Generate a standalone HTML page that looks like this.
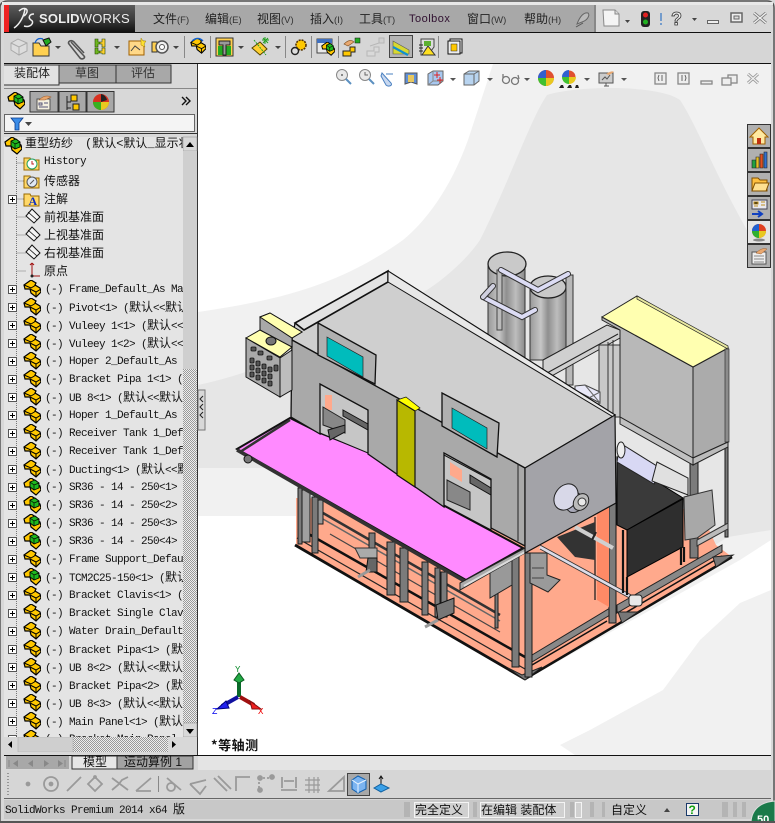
<!DOCTYPE html>
<html><head><meta charset="utf-8">
<style>
html,body{margin:0;padding:0}
body{width:775px;height:823px;position:relative;overflow:hidden;background:#d8d8d8;font-family:"Liberation Sans","WenQuanYi Zen Hei",sans-serif}
.a{position:absolute}
#tree{position:absolute;left:4px;top:137px;width:179px;height:600px;overflow:hidden;background:#e4e4e4}
.r{position:absolute;white-space:pre;font:11px/18px "Liberation Mono","WenQuanYi Zen Hei",monospace;letter-spacing:-.6px;color:#111;height:18px}
.r i{font-style:normal;font-size:12px;letter-spacing:0}
.m{position:absolute;top:11px;font-size:12px;color:#222;white-space:pre;line-height:16px}
.m small{font-size:9.5px;color:#333}
.s{position:absolute;font-size:12px;color:#111;white-space:pre;line-height:16px}
svg{position:absolute;left:0;top:0}
</style></head>
<body>
<svg width="775" height="823" style="z-index:0">
<defs>
<symbol id="part" viewBox="0 0 18 18"><path d="M1 5 L8 0 L13 3 L12 5 L17 8 L18 12 L13 17 L8 13 L7 9 L2 9Z" fill="#ffc800" stroke="#000" stroke-width="1.2"/><path d="M1 5L8 8 L13 5 M7 9 L13 12 L18 9 M13 12V17" fill="none" stroke="#000" stroke-width="1"/></symbol>
<symbol id="asm" viewBox="0 0 18 18"><path d="M1 5 L8 0 L13 3 L12 5 L17 8 L18 12 L13 17 L8 13 L7 9 L2 9Z" fill="#ffc800" stroke="#000" stroke-width="1.2"/><path d="M7 4 L12 2 L16 5 V10 L11 12 L7 9Z" fill="#1eb81e" stroke="#000" stroke-width=".9"/><path d="M7 4L11 7 L16 5 M11 7V12" fill="none" stroke="#000" stroke-width=".7"/></symbol>
<symbol id="plus" viewBox="0 0 9 9"><rect x=".5" y=".5" width="8" height="8" fill="#fff" stroke="#555"/><path d="M2 4.500H7M4.500 2V7" stroke="#000"/></symbol>
<symbol id="plane" viewBox="0 0 18 18"><path d="M8 1 L16 9 L10 15 L2 8Z" fill="#f4f4f4" stroke="#111"/><path d="M4 4L13 12" stroke="#111" stroke-width=".8" fill="none"/></symbol>
<symbol id="folder" viewBox="0 0 18 18"><path d="M1 4H7L8 6H16V16H1Z" fill="#ffd868" stroke="#9a6a00"/></symbol>
<pattern id="chk" width="2" height="2" patternUnits="userSpaceOnUse"><rect width="2" height="2" fill="#eee"/><rect width="1" height="1" fill="#999"/><rect x="1" y="1" width="1" height="1" fill="#999"/></pattern>
<linearGradient id="logo" x1="0" x2="0" y1="0" y2="1"><stop offset="0" stop-color="#5c5c5c"/><stop offset=".55" stop-color="#3a3a3a"/><stop offset="1" stop-color="#111"/></linearGradient>
<linearGradient id="tank" x1="0" x2="1" y1="0" y2="0"><stop offset="0" stop-color="#999"/><stop offset=".3" stop-color="#c6c6c6"/><stop offset=".5" stop-color="#8f8f8f"/><stop offset=".75" stop-color="#bdbdbd"/><stop offset="1" stop-color="#8a8a8a"/></linearGradient>
<linearGradient id="ball" x1="0" x2="1" y1="0" y2="1"><stop offset="0" stop-color="#f4f4ff"/><stop offset=".5" stop-color="#c8c8e8"/><stop offset="1" stop-color="#888"/></linearGradient>
</defs>

<!-- window frame -->
<rect width="775" height="823" fill="#d8d8d8"/>
<path d="M0 823V8Q0 1 8 1H767Q774 1 774 8V823" fill="none" stroke="#555" stroke-width="1.5"/>
<rect x="2" y="2" width="771" height="3" fill="#e8e8e8"/>
<rect x="135" y="5" width="460" height="27" fill="#a8a8a8"/>
<rect x="595" y="5" width="176" height="27" fill="#d8d8d8"/>
<rect x="594" y="5" width="2" height="27" fill="#888"/>
<rect x="4" y="5" width="5" height="27" fill="#ee2222"/>
<rect x="9" y="5" width="126" height="27" fill="url(#logo)"/>
<rect x="4" y="32" width="767" height="1.2" fill="#111"/>
<rect x="4" y="33" width="767" height="30" fill="#d6d6d6"/>
<rect x="4" y="63" width="767" height="1.2" fill="#111"/>
<!-- logo mark -->
<path d="M14 28 C20 24 24 16 25 9 M19 11 C23 7 28 8 27 12 C26 15 24 16 23 16 M34 14 C29 14 28 18 31 20 C35 22 31 28 24 26" fill="none" stroke="#eee" stroke-width="1.5"/>

<!-- viewport background -->
<rect x="198" y="64" width="573" height="691" fill="#fff"/>
<path d="M493 64 L468 140 C450 190 425 222 403 240 C340 285 280 300 198 312 V516 H298 L525 680 L740 560 L771 540 V64Z" fill="#f1f1f1"/>
<path d="M771 590 L740 603 L700 640 L663 690 L590 730 L560 745 L575 755 H771Z" fill="#f1f1f1"/>
<path d="M198 385 C260 372 330 340 427 290 C450 275 470 255 480 240 C510 180 530 120 547 95 C580 85 660 85 680 100 C700 130 720 190 771 270 V530 L728 537 L525 660 L298 500 V468 H198Z" fill="#e6e6e6"/>

<!-- base / orange floor -->
<path d="M296 498 L296 545 L525 679 L732 557 L716 545 L700 510 L617 505 L420 500Z" fill="#ffa98c"/>
<g fill="none" stroke-linecap="butt">
<path d="M323 513 L500 615" stroke="#333" stroke-width="2.500"/>
<path d="M323 519 L500 621" stroke="#666" stroke-width="1.500"/>
<path d="M330 534 L500 632" stroke="#444" stroke-width="1.200"/>
<path d="M298 528 L525 657" stroke="#111" stroke-width="2.500"/>
<path d="M297 538 L525 669" stroke="#222" stroke-width="1.200"/>
<path d="M295 545 L525 679" stroke="#111" stroke-width="2.800"/>
<path d="M525 679 L732 557" stroke="#111" stroke-width="2.500"/>
</g>
<g stroke="#222" stroke-width="1">
<path d="M532 655 L610 608 V615 L532 662Z" fill="#888"/>
<path d="M617 605 L722 545 V552 L617 613Z" fill="#888"/>
<path d="M532 665 L607 621" stroke="#111" stroke-width="1.500" fill="none"/>
<path d="M620 616 L722 556" stroke="#111" stroke-width="1.500" fill="none"/>
<path d="M508 668 L522 675 L542 667 L525 680Z" fill="#777"/>
<path d="M618 612 L638 612 L622 623Z" fill="#777"/>
<path d="M713 557 L733 555 L716 567Z" fill="#777"/>
</g>
<!-- posts -->
<g fill="#7b7b7b" stroke="#1a1a1a" stroke-width="1">
<rect x="298" y="488" width="4" height="56"/><rect x="302" y="490" width="8" height="52" fill="#a0a0a0"/>
<rect x="312" y="497" width="6" height="56"/><rect x="318" y="500" width="5" height="24" fill="#999"/>
<rect x="369" y="533" width="6" height="27"/>
<rect x="387" y="542" width="8" height="53"/><rect x="400" y="548" width="8" height="54"/>
<rect x="422" y="562" width="6" height="53"/><rect x="435" y="568" width="5" height="49"/><rect x="441" y="572" width="6" height="45"/>
<rect x="495" y="570" width="3" height="58"/>
<rect x="512" y="555" width="7" height="112"/><rect x="525" y="553" width="7" height="124"/>
<rect x="609" y="503" width="7" height="120"/>
<rect x="690" y="458" width="8" height="100"/><rect x="725" y="442" width="3" height="95"/>
</g>
<path d="M597 507 H609 V607 L597 600Z" fill="#ff8a66"/><path d="M595 517V600" stroke="#222" stroke-width="1.300"/>
<!-- valves -->
<path d="M355 548 H377 V558 H360Z" fill="#aaa" stroke="#333"/>
<path d="M368 558 H377 V572 H366Z" fill="#666" stroke="#111"/><path d="M358 577 L370 570" stroke="#999" stroke-width="3"/>
<path d="M436 605 L454 598 V613 L438 620Z" fill="#777" stroke="#111"/><path d="M425 627 L438 620" stroke="#999" stroke-width="3"/>
<!-- motor -->
<path d="M530 553 L547 553 V575 L560 580 L548 592 L530 583Z" fill="#9a9a9a" stroke="#222"/><path d="M532 568h12M532 578h12" stroke="#444"/>
<path d="M490 566 L512 556 V585 L490 598Z" fill="#999" stroke="#222"/>
<!-- pipe -->
<path d="M557 537 L595 522 V560 L575 557Z" fill="#333"/>
<path d="M540 547 L633 598" stroke="#dcdce8" stroke-width="3.500"/><path d="M540 545 L633 596 M540 549 L633 600" stroke="#333" stroke-width=".8"/>
<path d="M575 527 L613 548" stroke="#d0d0d0" stroke-width="4"/><path d="M592 540 l4-8" stroke="#222" stroke-width="2"/>
<rect x="629" y="595" width="13" height="11" rx="3" fill="#e8e8e8" stroke="#222"/>

<!-- dark bin -->
<path d="M617 457 L683 498 L627 530 L617 525Z" fill="#3a3a3a" stroke="#000"/>
<path d="M627 530 L683 499 V547 L627 577Z" fill="#2e2e2e" stroke="#000"/>
<path d="M623 530V593M627 577V595M681 547V565M684 547V562" stroke="#111" stroke-width="2.200"/>
<!-- rear motor -->
<path d="M620 443 L660 468 L654 484 L617 462Z" fill="#d8d8f4" stroke="#222"/>
<ellipse cx="621" cy="450" rx="4" ry="8" fill="#eee" stroke="#222"/>
<path d="M657 462 L688 478 L688 495 L652 481Z" fill="#e0e0e0" stroke="#222"/>
<path d="M684 497 L712 490 L715 525 L697 538 L685 540Z" fill="#a8a8a8" stroke="#333"/>
<path d="M697 540 L728 523 V529 L697 546Z" fill="#bbb" stroke="#333"/>

<!-- tanks -->
<path d="M488 263 V352 L525 372 V263Z" fill="url(#tank)" stroke="#333"/>
<ellipse cx="507" cy="264" rx="19" ry="12" fill="#c9c9c9" stroke="#222" stroke-width="1.300"/>
<path d="M530 287 V360 L566 360 V287Z" fill="url(#tank)" stroke="#333"/>
<ellipse cx="548" cy="287" rx="18" ry="11" fill="#c9c9c9" stroke="#222" stroke-width="1.300"/>
<rect x="566" y="275" width="7" height="110" fill="#b8b8b8" stroke="#333"/>
<rect x="497" y="270" width="5" height="60" fill="#bbb" stroke="#444"/>
<g fill="none" stroke-linecap="round">
<path d="M501 270 L538 290 L568 274" stroke="#333" stroke-width="6"/><path d="M501 270 L538 290 L568 274" stroke="#dcdcf4" stroke-width="4"/>
<path d="M483 297 L522 317 L535 310" stroke="#333" stroke-width="6"/><path d="M483 297 L522 317 L535 310" stroke="#dcdcf4" stroke-width="4"/>
<path d="M483 297 L493 286" stroke="#333" stroke-width="6"/><path d="M483 297 L493 286" stroke="#d0d0e0" stroke-width="4"/>
</g>
<!-- connector frame -->
<path d="M543 360 L607 325 L620 330 L620 338 L548 378 L543 372Z" fill="#d0d0d0" stroke="#222"/>
<path d="M547 373 L618 334" stroke="#222"/>
<path d="M599 345 H620 V417 H599Z" fill="#c8c8c8" stroke="#333"/><path d="M608 342V415M613 340V416" stroke="#333"/>
<path d="M575 386 L585 385 L600 392 V403 L575 390Z" fill="#e8e8f8" stroke="#444"/><path d="M585 385 L600 403 M600 392 L585 400" stroke="#666" fill="none"/>

<!-- right cabinet -->
<path d="M602 317 L693 367 V458 L620 417 V330 L602 320Z" fill="#b8b8b8" stroke="#222"/>
<path d="M693 367 L728 348 V442 L693 458Z" fill="#ababab" stroke="#222"/>
<path d="M602 317 L637 296 L728 348 L693 367Z" fill="#ffffb0" stroke="#222"/>
<path d="M637 296 L728 346 V349 L637 299Z" fill="#e8e8a0" stroke="#222" stroke-width=".7"/>
<path d="M725 349 H729 V442 H725Z" fill="#8c8c8c" stroke="#333" stroke-width=".7"/>
<path d="M693 458 L728 442 V447 L693 465Z" fill="#bbb" stroke="#222"/>
<path d="M620 417 L693 458 V465 L620 424Z" fill="#c0c0c0" stroke="#222"/>

<!-- main enclosure top -->
<path d="M388 271 L615 415 L525 468 L292 340 L295 323Z" fill="#cfcfcf" stroke="#111" stroke-width="1.300"/>
<path d="M295 323 L388 271 L388 282 L318 322 L304 330Z" fill="#e2e2e2" stroke="#111" stroke-width="1.600"/>
<path d="M388 271 L615 415 V418 L388 282Z" fill="#e8e8e8" stroke="#111"/>
<!-- pink tray -->
<path d="M237 449 L290 418 L320 433 L368 452 L443 505 L523 548 L466 580Z" fill="#ff8aff" stroke="#111" stroke-width="2"/>
<path d="M237 450 L466 582" stroke="#333" stroke-width="3.500" fill="none"/>
<path d="M240 452 L290 420" stroke="#333" stroke-width="2.500" fill="none"/>
<circle cx="248" cy="459" r="4" fill="#777" stroke="#111"/>
<path d="M460 583 L525 548 V553 L460 590Z" fill="#aaa" stroke="#222"/>
<path d="M464 586 L525 552" stroke="#ddd" stroke-width="2"/>
<!-- opening interiors -->
<path d="M320 384 L368 410 V453 L320 433Z" fill="#c6c6c6" stroke="#111"/>
<path d="M325 395 H332 V410 H325Z" fill="#ffa98c"/><path d="M323 407 L345 420 V433 L323 425Z" fill="#888" stroke="#222"/><path d="M343 410 L368 424 V430 L343 416Z" fill="#666" stroke="#111"/><path d="M328 430 L345 425 V432 L330 440Z" fill="#666" stroke="#111"/>
<path d="M444 455 L491 480 V530 L444 505Z" fill="#c6c6c6" stroke="#111"/>
<path d="M450 462 L462 470 V482 L450 475Z" fill="#ffa98c"/><path d="M447 480 L470 492 V510 L447 500Z" fill="#888" stroke="#222"/><path d="M470 475 L491 488 V495 L470 483Z" fill="#666" stroke="#111"/>
<!-- front wall -->
<path d="M292 340 L525 468 V546 L491 528 V479 L444 453 V507 L368 454 V410 L320 384 V434 L291 417Z" fill="#a9a9a9" stroke="#111" stroke-width="1.300"/>
<path d="M518 464 V541 M525 468V553" stroke="#222" stroke-width="1"/>
<!-- yellow strip -->
<path d="M397 400 L406 397 L420 408 L415 411Z" fill="#ffff00" stroke="#111" stroke-width=".7"/>
<path d="M397 400 L415 411 V487 L397 475Z" fill="#b8b800" stroke="#111" stroke-width="1.200"/>
<!-- right wall -->
<path d="M525 468 L615 415 L616 503 L525 553Z" fill="#a3a3a8" stroke="#111" stroke-width="1.200"/>
<!-- screens -->
<path d="M318 323 L376 355 L375 384 L318 355Z" fill="#b0b0b0" stroke="#111" stroke-width="1.300"/>
<path d="M327 337 L363 357 V377 L327 356Z" fill="#00bcbc" stroke="#222" stroke-width=".7"/>
<path d="M442 393 L499 423 L497 457 L442 426Z" fill="#b0b0b0" stroke="#111" stroke-width="1.300"/>
<path d="M452 408 L487 428 V449 L452 428Z" fill="#00bcbc" stroke="#222" stroke-width=".7"/>
<!-- round port -->
<path d="M568 484 L584 498 C587 505 578 515 570 512 L556 500Z" fill="url(#ball)" stroke="#222"/>
<ellipse cx="566" cy="497" rx="11" ry="14" transform="rotate(35 566 497)" fill="#d8d8e8" stroke="#222"/>
<ellipse cx="581" cy="502" rx="7" ry="9" transform="rotate(35 581 502)" fill="#bbb" stroke="#222"/>
<circle cx="582" cy="502" r="4" fill="#e8e8e8" stroke="#333"/>
<!-- control box -->
<path d="M260 317 L270 313 L302 332 L292 338 V348 L260 330Z" fill="#a8a8a8" stroke="#111"/>
<path d="M260 317 L270 313 L302 332 L292 338Z" fill="#ffffb0" stroke="#111"/>
<path d="M246 338 L260 330 L292 347 L280 357Z" fill="#ffffb0" stroke="#111"/>
<path d="M246 338 L280 358 V397 L246 377Z" fill="#aaa" stroke="#111"/>
<path d="M280 358 L292 350 V390 L280 397Z" fill="#bdbdbd" stroke="#111"/>
<ellipse cx="271" cy="341" rx="5" ry="4" fill="#777" stroke="#111"/>
<g fill="#555" stroke="#111" stroke-width=".8">
<rect x="251" y="347" width="5" height="4" rx="1"/><rect x="258" y="351" width="5" height="4" rx="1"/><rect x="267" y="356" width="5" height="4" rx="1"/>
<rect x="250" y="358" width="4" height="5" rx="1"/><rect x="256" y="361" width="4" height="5" rx="1"/><rect x="262" y="364" width="4" height="5" rx="1"/><rect x="268" y="367" width="4" height="5" rx="1"/><rect x="274" y="365" width="4" height="6" rx="1"/>
<rect x="250" y="365" width="4" height="5" rx="1"/><rect x="256" y="368" width="4" height="5" rx="1"/><rect x="262" y="371" width="4" height="5" rx="1"/><rect x="268" y="374" width="4" height="5" rx="1"/>
<rect x="250" y="372" width="4" height="5" rx="1"/><rect x="256" y="375" width="4" height="5" rx="1"/><rect x="262" y="378" width="4" height="5" rx="1"/><rect x="268" y="381" width="4" height="5" rx="1"/>
</g>

<!-- triad -->
<path d="M239 682 V697" stroke="#0a6a2a" stroke-width="4"/>
<path d="M239 673 L244 680 L239 683 L234 680Z" fill="#22aa44" stroke="#0a5a20"/>
<path d="M238 697 L222 706" stroke="#1010a0" stroke-width="4"/>
<path d="M226 701 L217 709 L229 708Z" fill="#2020f0" stroke="#000080"/>
<path d="M240 697 L254 705" stroke="#a01010" stroke-width="4"/>
<path d="M250 701 L261 709 L252 709Z" fill="#ee2020" stroke="#801010"/>
<text x="235" y="672" font-family="Liberation Mono" font-size="9" fill="#0a8a2a">Y</text>
<text x="212" y="714" font-family="Liberation Mono" font-size="9" fill="#0000ee">Z</text>
<text x="258" y="714" font-family="Liberation Mono" font-size="9" fill="#ee0000">X</text>

<!-- left panel chrome -->
<rect x="4" y="64" width="193" height="73" fill="#d8d8d8"/>
<rect x="197" y="64" width="1" height="691" fill="#333"/>
<rect x="59" y="65" width="112" height="18" fill="#a8a8a8" stroke="#333"/>
<path d="M116 65V83" stroke="#333"/>
<path d="M4 65 H59 V85 H4" fill="#e2e2e2" stroke="#333"/>
<rect x="4" y="88" width="193" height="1" fill="#888"/>
<rect x="4" y="91" width="25" height="21" fill="#d8d8d8"/>
<g fill="#a8a8a8" stroke="#333"><rect x="30" y="91.500" width="28" height="20.500"/><rect x="59" y="91.500" width="27" height="20.500"/><rect x="87" y="91.500" width="27" height="20.500"/></g>
<use href="#asm" x="7" y="92" width="18" height="18"/>
<g transform="translate(36,95)"><rect x="1" y="4" width="13" height="11" fill="#f4f0e0" stroke="#555"/><path d="M3 8h3v2H3zM8 8h4M3 12h9" stroke="#557" fill="none"/><path d="M3 5 Q9 -1 15 2 L9 5Z" fill="#e8a870" stroke="#a06030" stroke-width=".6"/></g>
<g transform="translate(65,95)" stroke="#222"><path d="M2 1V15M2 7H6M2 13H6" fill="none"/><rect x="6" y="0" width="6" height="6" fill="#ffc800"/><rect x="8" y="9" width="6" height="6" fill="#ffc800"/></g>
<circle cx="101" cy="102" r="8" fill="#d83020"/><path d="M101 102 L93 102 A8 8 0 0 0 101 110Z" fill="#38b020"/><path d="M101 102 L109 102 A8 8 0 0 1 101 110Z" fill="#e8c820"/><path d="M101 94 A8 8 0 0 1 107 100 L101 102Z" fill="#222"/>
<path d="M182 97l4 4-4 4M186 97l4 4-4 4" fill="none" stroke="#111" stroke-width="1.400"/>
<rect x="4.500" y="114.500" width="190" height="17" fill="#f4f4f4" stroke="#666"/>
<path d="M11 118 H23 L19 123 V130 H15 V123Z" fill="#3a8ce8" stroke="#0a3a8a" stroke-width=".8"/>
<path d="M25 122H32L28.500 126Z" fill="#444"/>
<rect x="4" y="133" width="193" height="1" fill="#333"/>

<!-- toolbar icons -->
<g transform="translate(10,38)"><path d="M1 5 L8 1 L17 5 V13 L9 17 L1 12Z" fill="#ddd" stroke="#aaa"/><path d="M1 5L9 9L17 5M9 9V17" fill="none" stroke="#aaa"/></g>
<g transform="translate(33,37)"><path d="M0 6H6L8 9H16V19H0Z" fill="#ffd050" stroke="#333"/><path d="M10 3L16 1 L18 5 L13 9Z" fill="#22aa22" stroke="#111"/><path d="M2 6 Q4 0 10 2" fill="none" stroke="#1060d0" stroke-width="1.300"/></g>
<path d="M71 42 L84 56 C86 58 82 60 80 58 L69 44 C67 42 71 39 74 42 L84 53" fill="none" stroke="#555" stroke-width="1.600"/>
<g fill="#6fb820" stroke="#224400" stroke-width=".6"><path d="M95 39h3v3h2v2h-2v3h-3zM95 48h3v3h2v2h-2v1h-3z"/><path d="M105 39h-3v3h-2v2h2v3h3zM105 48h-3v3h-2v2h2v1h3z" fill="#ffd030"/></g>
<g transform="translate(128,38)"><rect x="1" y="3" width="15" height="14" fill="#ffd888" stroke="#a06000"/><path d="M3 13L7 8L12 12" fill="none" stroke="#444"/><path d="M13 0l2 3 3 0-2 3 1 3-4-2Z" fill="#ffe030" stroke="#a08000" stroke-width=".5"/></g>
<g transform="translate(151,39)"><path d="M1 3H6V13H1Z" fill="#ffd050" stroke="#333"/><circle cx="11" cy="8" r="6" fill="#f0f0f0" stroke="#555" stroke-width="1.500"/><circle cx="11" cy="8" r="2.500" fill="#fff" stroke="#555"/></g>
<g transform="translate(190,38)"><use href="#part" width="16" height="16"/><path d="M2 3Q8-2 13 3" stroke="#1060d0" fill="none" stroke-width="1.400"/></g>
<g transform="translate(216,38)"><rect x="0" y="0" width="17" height="18" fill="#ffd050" stroke="#333"/><rect x="2" y="8" width="13" height="9" fill="#22aa22"/><path d="M3 3H14V7H10V17H7V7H3Z" fill="#999" stroke="#222"/></g>
<g transform="translate(252,38)"><path d="M0 10L8 4L15 11L8 17Z" fill="#ffd030" stroke="#554400"/><path d="M2 2L14 17" stroke="#22a020" stroke-dasharray="2 1"/><path d="M13-1v7M10 2h7M11 0l5 5M16 0l-5 5" stroke="#22a020"/></g>
<g transform="translate(290,38)"><circle cx="11" cy="7" r="5" fill="#ffc800" stroke="#553300" stroke-dasharray="2 1" stroke-width="1.600"/><circle cx="5" cy="13" r="3.500" fill="#ddd" stroke="#222" stroke-width="1.400"/></g>
<g transform="translate(317,38)"><rect x="0" y="1" width="15" height="14" fill="#e8e8e8" stroke="#444"/><rect x="0" y="1" width="15" height="4" fill="#4070c0"/><use href="#asm" x="4" y="4" width="14" height="14"/></g>
<g transform="translate(342,38)"><path d="M1 13H8V9H13V14H9V18H1Z" fill="#ffc800" stroke="#222"/><path d="M2 6 Q8 0 12 4 L6 8Z" fill="#e8a870" stroke="#805020" stroke-width=".6"/><rect x="13" y="0" width="5" height="5" fill="#22aa22" stroke="#111" stroke-width=".5"/></g>
<g transform="translate(366,38)" opacity=".5"><path d="M1 13H8V9H13V14H9V18H1Z" fill="#ddd" stroke="#999"/><rect x="13" y="0" width="5" height="5" fill="#ccc" stroke="#999"/><path d="M4 8L13 5" stroke="#999"/></g>
<rect x="389.500" y="35.500" width="23" height="22" fill="#b4b4b4" stroke="#444"/>
<g transform="translate(392,39)"><path d="M1 2 L17 11 V15 H1Z" fill="#d8d830" stroke="#555" stroke-width=".6"/><path d="M1 8 L16 16" stroke="#1090d0" stroke-width="2.200"/></g>
<g transform="translate(419,38)"><path d="M2 1H15V9L9 17H2Z" fill="#ddd" stroke="#444"/><path d="M9 8L16 17H3Z" fill="#ffe020" stroke="#333"/><path d="M0 7h4M0 10h4M0 13h4" stroke="#222"/><rect x="5" y="3" width="7" height="5" fill="#5cb030"/></g>
<g transform="translate(446,38)"><rect x="4" y="1" width="12" height="14" fill="#fff" stroke="#111"/><rect x="2" y="3" width="12" height="13" fill="#eee" stroke="#111"/><rect x="5" y="6" width="6" height="7" fill="#ffc800" stroke="#222" stroke-width=".5"/></g>
<g fill="#444"><path d="M55 46h6l-3 3zM114 46h6l-3 3zM173 46h6l-3 3zM238 46h6l-3 3zM275 46h6l-3 3z"/></g>
<g stroke="#888"><path d="M184.500 36V58M210.500 36V58M285.500 36V58M311.500 36V58M338.500 36V58M438.500 36V58"/></g>

<!-- titlebar right icons -->
<path d="M603 10H615L619 14V26H604Z" fill="#f4f4f4" stroke="#888"/><path d="M615 10V14H619" fill="#ddd" stroke="#888"/>
<path d="M625 20h5l-2.500 3z" fill="#444"/>
<rect x="641" y="11" width="9" height="16" rx="3" fill="#222"/><circle cx="645.500" cy="15" r="2.500" fill="#e02020"/><circle cx="645.500" cy="22" r="2.500" fill="#20b020"/>
<path d="M661 13V21M661 23V25" stroke="#1060c0" stroke-width="1"/>
<text x="671" y="25" font-family="Liberation Sans" font-size="18" font-weight="bold" fill="#f0f0f0" stroke="#333" stroke-width=".8">?</text>
<path d="M692 18h5l-2.500 3z" fill="#444"/>
<rect x="707.500" y="20.500" width="11" height="3" fill="#eee" stroke="#666"/>
<rect x="731" y="13" width="11" height="9" fill="#eee" stroke="#666" stroke-width="1.500"/><rect x="734" y="16" width="5" height="3" fill="#ddd" stroke="#666"/>
<path d="M754 13L766 23M766 13L754 23" stroke="#777" stroke-width="3"/><path d="M754 13L766 23M766 13L754 23" stroke="#eee" stroke-width="1.400"/>
<path d="M577 24 C580 16 584 12 588 13 C590 15 588 20 582 22Z" fill="#bbb" stroke="#666"/><path d="M576 27L583 23" stroke="#555"/>

<!-- viewport heads-up icons -->
<g fill="#e8e8e8" stroke="#888"><circle cx="342" cy="75" r="5.500"/><circle cx="365" cy="75" r="5.500"/></g>
<path d="M346 79l5 5M369 79l5 5" stroke="#5c90c0" stroke-width="2"/>
<path d="M341 75h2M342 74v2M365 72v3h3" stroke="#666" fill="none"/>
<path d="M382 73l9 10 c2 3 -3 4 -5 2l-5-9ZM386 74h7" fill="#c8d8f0" stroke="#4a80c0"/>
<path d="M405 73 H417 V84 L411 82 L405 84Z" fill="#6090d8" stroke="#555"/><rect x="408" y="75" width="6" height="7" fill="#e8c860"/>
<path d="M428 74 L433 71 H443 V81 L438 85 H428Z" fill="#a8c8f0" stroke="#666"/><path d="M433 71V81H443M433 81L428 85" fill="none" stroke="#888"/><path d="M434 75h6M437 72v6M437 80h6M440 77v6" stroke="#e02020"/>
<path d="M464 74 L469 71 H479 V81 L474 85 H464Z" fill="#b8d4f0" stroke="#666"/><path d="M474 74H464M474 74V85M474 74L479 71" fill="none" stroke="#666"/>
<g fill="none" stroke="#777" stroke-width="1.300"><circle cx="506" cy="80" r="3.500"/><circle cx="515" cy="81" r="3.500"/><path d="M503 74 L503 78M518 75 L519 79"/></g>
<circle cx="546" cy="78" r="8" fill="#e05030"/><path d="M546 78H538A8 8 0 0 0 546 86Z" fill="#40c030"/><path d="M546 78V86A8 8 0 0 0 554 78Z" fill="#e8c820"/><path d="M546 78V70A8 8 0 0 0 538 78Z" fill="#3060d0"/>
<circle cx="569" cy="77" r="6.500" fill="#e05030"/><path d="M569 77H562A7 7 0 0 0 569 84Z" fill="#40c030"/><path d="M569 77V84A7 7 0 0 0 576 77Z" fill="#e8c820"/><path d="M569 77V70A7 7 0 0 0 562 77Z" fill="#3060d0"/>
<path d="M561 85l-2 3h5l-1-3zM569 85l-2 3h5l-1-3zM576 85l-1 3h4l-1-3z" fill="#222"/>
<rect x="599" y="73" width="14" height="10" fill="#ccc" stroke="#555"/><path d="M602 80l3-3 2 2 3-4" stroke="#555" fill="none"/><path d="M604 86h5M606 83v3" stroke="#555"/><path d="M606 74 Q612 70 614 72 L609 75Z" fill="#e8a870"/>
<g fill="#555"><path d="M450 78h6l-3 3zM487 78h6l-3 3zM524 78h6l-3 3zM584 78h6l-3 3zM621 78h6l-3 3z"/></g>
<g fill="#eee" stroke="#888" stroke-width="1.300"><rect x="655" y="73" width="11" height="11"/><rect x="678" y="73" width="11" height="11"/><rect x="701" y="81" width="11" height="3"/><rect x="728" y="75" width="9" height="8"/><rect x="722" y="78" width="9" height="7"/></g>
<path d="M659 75l-1 3 1 3M662 75v6M682 75v6M685 75l1 3-1 3" fill="none" stroke="#666"/>
<path d="M748 74L758 83M758 74L748 83" stroke="#999" stroke-width="3"/><path d="M748 74L758 83M758 74L748 83" stroke="#f0f0f0" stroke-width="1.200"/>

<!-- right task pane -->
<g fill="#b0b0b0" stroke="#333"><rect x="747.500" y="124.500" width="23" height="23"/><rect x="747.500" y="148.500" width="23" height="23"/><rect x="747.500" y="172.500" width="23" height="23"/><rect x="747.500" y="196.500" width="23" height="23"/><rect x="747.500" y="220.500" width="23" height="23" fill="#e4e4e4"/><rect x="747.500" y="244.500" width="23" height="23"/></g>
<path d="M759 128 L768 137 H765 V144 H753 V137 H750Z" fill="#ffe9a0" stroke="#a06000"/><rect x="757" y="138" width="4" height="6" fill="#c03010"/>
<g stroke="#222" stroke-width=".6"><path d="M752 160h4v8h-4z" fill="#20a040"/><path d="M756 157h3v11h-3z" fill="#e8c020"/><path d="M760 154h3v14h-3z" fill="#e05020"/><path d="M764 152h3v16h-3z" fill="#3070d0"/></g>
<path d="M752 178H758L760 180H767V191H752Z" fill="#ffc040" stroke="#805000"/><path d="M752 191L755 183H769L766 191Z" fill="#ffe090" stroke="#805000"/>
<rect x="752" y="200" width="15" height="9" fill="#e8e8f0" stroke="#445"/><path d="M754 202h4v2h-4zM761 202h4M761 205h4M754 206h4" stroke="#c09020"/><path d="M752 214h9M758 211l4 3-4 3" fill="none" stroke="#1040c0" stroke-width="2"/>
<circle cx="759" cy="231" r="7" fill="#e04020"/><path d="M759 231H752A7 7 0 0 0 759 238Z" fill="#30b030"/><path d="M759 231V238A7 7 0 0 0 766 231Z" fill="#e8c820"/><path d="M759 231V224A7 7 0 0 0 752 231Z" fill="#2060d0"/><ellipse cx="759" cy="240" rx="6" ry="1.500" fill="#888"/>
<rect x="752" y="252" width="14" height="12" fill="#eee" stroke="#555"/><path d="M754 256h10M754 259h10M754 262h10" stroke="#888"/><path d="M756 253 Q762 247 767 249 L761 254Z" fill="#e8a870" stroke="#a06030" stroke-width=".5"/>

<!-- splitter handle -->
<rect x="198" y="390" width="7" height="40" fill="#d8d8d8" stroke="#777"/>
<path d="M203 396l-3 3 3 3M203 404l-3 3 3 3M203 412l-3 3 3 3" fill="none" stroke="#222"/>

<!-- bottom chrome -->
<rect x="4" y="755" width="767" height="1.500" fill="#111"/>
<rect x="198" y="756" width="573" height="14" fill="#e4e4e4"/>
<rect x="4" y="756" width="194" height="14" fill="#d8d8d8"/>
<rect x="6" y="756" width="63" height="13" fill="#a8a8a8"/>
<g fill="#888"><path d="M11 760v7M18 760l-5 3.500 5 3.500zM33 760l-5 3.500 5 3.500zM44 760l5 3.500-5 3.500zM58 760l5 3.500-5 3.500zM65 760v7"/></g>
<path d="M9 760v7M65 760v7" stroke="#888"/>
<path d="M72 756H117V769H72Z" fill="#e6e6e6" stroke="#333"/>
<path d="M117 756H193V769H117Z" fill="#a2a2a2" stroke="#333"/>
<rect x="4" y="770" width="767" height="28" fill="#d6d6d6"/>
<rect x="4" y="798" width="767" height="1" fill="#666"/>
<path d="M8 773v24" stroke="#555" stroke-dasharray="1 2"/>
<!-- sketch tools -->
<g fill="none" stroke="#9a9a9a" stroke-width="1.800">
<circle cx="28" cy="784" r="1.500" fill="#9a9a9a"/>
<circle cx="51" cy="784" r="7"/><circle cx="51" cy="784" r="1.500" fill="#9a9a9a"/>
<path d="M67 791L81 777"/>
<path d="M95 777L102 784L95 791L88 784Z"/><circle cx="95" cy="777" r="1"/>
<path d="M112 778L128 790M112 790L118 785L122 780 128 777"/>
<path d="M136 791L151 778M136 791H151"/>
<path d="M167 778L181 790"/><circle cx="171" cy="787" r="4"/>
<path d="M190 784L206 780M190 784L200 794L206 786"/>
<path d="M214 778L227 791M218 776L231 789"/>
<path d="M236 791V777H250"/>
<path d="M259 778H272M259 778V790" stroke-dasharray="2 2"/><circle cx="260" cy="778" r="2" fill="#9a9a9a"/><circle cx="272" cy="777" r="2" fill="#9a9a9a"/><circle cx="260" cy="790" r="2" fill="#9a9a9a"/>
<path d="M282 777V788M296 777V788M281 790H297M284 781H294"/>
<path d="M305 780H320M305 785H320M305 790H320M309 777V793M314 777V793M318 777V793" stroke-width="1.200"/>
<path d="M329 791L344 777V791Z"/>
</g>
<path d="M158.500 776V792" stroke="#888"/>
<rect x="347.500" y="773.500" width="22" height="22" fill="#a8a8a8" stroke="#444"/>
<path d="M352 780L358 776L366 780V789L358 793L352 789Z" fill="#7cb4f0" stroke="#1060b0"/><path d="M352 780L358 784L366 780M358 784V793" fill="none" stroke="#e8f4ff"/>
<path d="M381 776V787M379 779l2-3 2 3" stroke="#111" fill="none"/><path d="M374 788L381 784L389 788L381 792Z" fill="#3aa0e8" stroke="#1060a0"/>
<!-- status bar -->
<rect x="4" y="800" width="767" height="19" fill="#c8c8c8"/>
<g fill="#b4b4b4"><path d="M404 802h6v15h-6zM414 802h5v15h-5zM473 802h4v15h-4zM570 802h4v15h-4zM578 802h3v15h-3zM590 802h4v15h-4zM602 802h3v15h-3zM722 802h6v15h-6zM733 802h4v15h-4zM742 802h4v15h-4z"/></g>
<g fill="#d0d0d0" stroke="#f4f4f4"><rect x="414.500" y="802.500" width="54" height="15"/><rect x="480.500" y="802.500" width="84" height="15"/><rect x="575.500" y="802.500" width="6" height="15"/></g>
<path d="M664 812h6l-3-4z" fill="#444"/>
<rect x="686.500" y="803.500" width="12" height="12" fill="#f4f4f4" stroke="#1a3a6a"/>
<text x="688.500" y="814" font-family="Liberation Sans" font-weight="bold" font-size="12" fill="#10a010">?</text>
<path d="M751 822 C752 808 762 802 775 801 V823Z" fill="#1a7a4a" stroke="#ddd"/>
<text x="757" y="823" font-family="Liberation Sans" font-weight="bold" font-size="11" fill="#fff">50</text>
<rect x="0" y="821" width="775" height="2" fill="#555"/>
<!-- scrollbars -->
<rect x="183" y="137" width="14" height="600" fill="url(#chk)"/>
<rect x="183" y="137" width="14" height="14" fill="#d8d8d8" stroke="#888" stroke-width=".5"/>
<path d="M186 147h8l-4-5z" fill="#000"/>
<rect x="183" y="151" width="14" height="218" fill="#cfcfcf"/>
<rect x="183" y="723" width="14" height="14" fill="#d8d8d8" stroke="#888" stroke-width=".5"/>
<path d="M186 729h8l-4 5z" fill="#000"/>
<rect x="4" y="737" width="179" height="15" fill="url(#chk)"/>
<rect x="4" y="737" width="14" height="15" fill="#d8d8d8"/><path d="M12 741v7l-4-3.500z" fill="#000"/>
<rect x="18" y="737" width="55" height="15" fill="#cfcfcf" stroke="#aaa" stroke-width=".5"/>
<rect x="168" y="737" width="14" height="15" fill="#d8d8d8"/><path d="M172 741v7l4-3.500z" fill="#000"/>
<rect x="182" y="737" width="15" height="15" fill="#d8d8d8"/>
<rect x="4" y="752" width="193" height="3" fill="#d8d8d8"/>
</svg>

<!-- menu text -->
<div class="m" style="left:153px;">文件<small>(F)</small></div>
<div class="m" style="left:205px;">编辑<small>(E)</small></div>
<div class="m" style="left:257px;">视图<small>(V)</small></div>
<div class="m" style="left:310px;">插入<small>(I)</small></div>
<div class="m" style="left:359px;">工具<small>(T)</small></div>
<div class="m" style="left:409px;font-size:11px;letter-spacing:.5px;color:#301030;">Toolbox</div>
<div class="m" style="left:467px;">窗口<small>(W)</small></div>
<div class="m" style="left:524px;">帮助<small>(H)</small></div>
<div class="a" style="left:39px;top:11px;color:#eee;font:bold 13px/16px 'Liberation Sans';letter-spacing:.2px;white-space:pre">SOLID<span style="font-weight:normal">WORKS</span></div>

<!-- panel tabs -->
<div class="s" style="left:14px;top:65px;color:#222">装配体</div>
<div class="s" style="left:75px;top:65px;color:#333">草图</div>
<div class="s" style="left:131px;top:65px;color:#333">评估</div>

<!-- tree -->
<div id="tree">
<svg width="179" height="600">
<path d="M12.500 20V602M12.500 26H22M12.500 44H22M12.500 62H22M12.500 80H22M12.500 98H22M12.500 116H22M12.500 134H22" stroke="#777" stroke-dasharray="1 1" fill="none"/>
<use href="#asm" x="0" y="0" width="18" height="18"/>
<use href="#folder" x="19" y="17" width="18" height="18"/><circle cx="28" cy="27" r="5" fill="#fff" stroke="#20a060"/><path d="M28 24v3h2" stroke="#c02020" fill="none"/>
<use href="#folder" x="19" y="35" width="18" height="18"/><circle cx="28" cy="45" r="5" fill="#e0e8f4" stroke="#555"/><path d="M26 47l4-4" stroke="#555"/>
<use href="#folder" x="19" y="53" width="18" height="18"/><text x="24.500" y="68" font-family="Liberation Serif" font-weight="bold" font-size="12" fill="#1030c0">A</text>
<use href="#plus" x="4" y="58" width="9" height="9"/>
<use href="#plane" x="20" y="71" width="18" height="18"/><use href="#plane" x="20" y="89" width="18" height="18"/><use href="#plane" x="20" y="107" width="18" height="18"/>
<path d="M28 126V139M28 126l-2 2M28 126l2 2M28 139H36" stroke="#a01010" fill="none"/><circle cx="28" cy="139" r="1.500" fill="#222"/>
<g transform="translate(0,1)">
<use href="#part" x="19" y="142" width="18" height="18"/><use href="#part" x="19" y="160" width="18" height="18"/><use href="#part" x="19" y="178" width="18" height="18"/><use href="#part" x="19" y="196" width="18" height="18"/><use href="#part" x="19" y="214" width="18" height="18"/><use href="#part" x="19" y="232" width="18" height="18"/><use href="#part" x="19" y="250" width="18" height="18"/><use href="#part" x="19" y="268" width="18" height="18"/><use href="#part" x="19" y="286" width="18" height="18"/><use href="#part" x="19" y="304" width="18" height="18"/><use href="#part" x="19" y="322" width="18" height="18"/>
<use href="#asm" x="19" y="340" width="18" height="18"/><use href="#asm" x="19" y="358" width="18" height="18"/><use href="#asm" x="19" y="376" width="18" height="18"/><use href="#asm" x="19" y="394" width="18" height="18"/>
<use href="#part" x="19" y="412" width="18" height="18"/><use href="#asm" x="19" y="430" width="18" height="18"/><use href="#part" x="19" y="448" width="18" height="18"/><use href="#part" x="19" y="466" width="18" height="18"/><use href="#part" x="19" y="484" width="18" height="18"/><use href="#part" x="19" y="502" width="18" height="18"/><use href="#part" x="19" y="520" width="18" height="18"/><use href="#part" x="19" y="538" width="18" height="18"/><use href="#part" x="19" y="556" width="18" height="18"/><use href="#part" x="19" y="574" width="18" height="18"/><use href="#part" x="19" y="592" width="18" height="18"/>
<path d="M4 147" />
<use href="#plus" x="4" y="147" width="9" height="9"/><use href="#plus" x="4" y="165" width="9" height="9"/><use href="#plus" x="4" y="183" width="9" height="9"/><use href="#plus" x="4" y="201" width="9" height="9"/><use href="#plus" x="4" y="219" width="9" height="9"/><use href="#plus" x="4" y="237" width="9" height="9"/><use href="#plus" x="4" y="255" width="9" height="9"/><use href="#plus" x="4" y="273" width="9" height="9"/><use href="#plus" x="4" y="291" width="9" height="9"/><use href="#plus" x="4" y="309" width="9" height="9"/><use href="#plus" x="4" y="327" width="9" height="9"/><use href="#plus" x="4" y="345" width="9" height="9"/><use href="#plus" x="4" y="363" width="9" height="9"/><use href="#plus" x="4" y="381" width="9" height="9"/><use href="#plus" x="4" y="399" width="9" height="9"/><use href="#plus" x="4" y="417" width="9" height="9"/><use href="#plus" x="4" y="435" width="9" height="9"/><use href="#plus" x="4" y="453" width="9" height="9"/><use href="#plus" x="4" y="471" width="9" height="9"/><use href="#plus" x="4" y="489" width="9" height="9"/><use href="#plus" x="4" y="507" width="9" height="9"/><use href="#plus" x="4" y="525" width="9" height="9"/><use href="#plus" x="4" y="543" width="9" height="9"/><use href="#plus" x="4" y="561" width="9" height="9"/><use href="#plus" x="4" y="579" width="9" height="9"/><use href="#plus" x="4" y="597" width="9" height="9"/>
</g>
</svg>
<div class="r" style="left:21px;top:-2px"><i>重型纺纱　(默认&lt;默认_显示状</i></div>
<div class="r" style="left:40px;top:16px">History</div>
<div class="r" style="left:40px;top:36px"><i>传感器</i></div>
<div class="r" style="left:40px;top:54px"><i>注解</i></div>
<div class="r" style="left:40px;top:72px"><i>前视基准面</i></div>
<div class="r" style="left:40px;top:90px"><i>上视基准面</i></div>
<div class="r" style="left:40px;top:108px"><i>右视基准面</i></div>
<div class="r" style="left:40px;top:126px"><i>原点</i></div>
<div class="r" style="left:41px;top:144px">(-) Frame_Default_As Ma</div>
<div class="r" style="left:41px;top:162px">(-) Pivot&lt;1&gt; (<i>默认</i>&lt;&lt;<i>默认</i></div>
<div class="r" style="left:41px;top:180px">(-) Vuleey 1&lt;1&gt; (<i>默认</i>&lt;&lt;</div>
<div class="r" style="left:41px;top:198px">(-) Vuleey 1&lt;2&gt; (<i>默认</i>&lt;&lt;</div>
<div class="r" style="left:41px;top:216px">(-) Hoper 2_Default_As</div>
<div class="r" style="left:41px;top:234px">(-) Bracket Pipa 1&lt;1&gt; (</div>
<div class="r" style="left:41px;top:252px">(-) UB 8&lt;1&gt; (<i>默认</i>&lt;&lt;<i>默认</i></div>
<div class="r" style="left:41px;top:270px">(-) Hoper 1_Default_As</div>
<div class="r" style="left:41px;top:288px">(-) Receiver Tank 1_Def</div>
<div class="r" style="left:41px;top:306px">(-) Receiver Tank 1_Def</div>
<div class="r" style="left:41px;top:324px">(-) Ducting&lt;1&gt; (<i>默认</i>&lt;&lt;<i>默</i></div>
<div class="r" style="left:41px;top:342px">(-) SR36 - 14 - 250&lt;1&gt;</div>
<div class="r" style="left:41px;top:360px">(-) SR36 - 14 - 250&lt;2&gt;</div>
<div class="r" style="left:41px;top:378px">(-) SR36 - 14 - 250&lt;3&gt;</div>
<div class="r" style="left:41px;top:396px">(-) SR36 - 14 - 250&lt;4&gt;</div>
<div class="r" style="left:41px;top:414px">(-) Frame Support_Defau</div>
<div class="r" style="left:41px;top:432px">(-) TCM2C25-150&lt;1&gt; (<i>默认</i></div>
<div class="r" style="left:41px;top:450px">(-) Bracket Clavis&lt;1&gt; (</div>
<div class="r" style="left:41px;top:468px">(-) Bracket Single Clav</div>
<div class="r" style="left:41px;top:486px">(-) Water Drain_Default</div>
<div class="r" style="left:41px;top:504px">(-) Bracket Pipa&lt;1&gt; (<i>默</i></div>
<div class="r" style="left:41px;top:522px">(-) UB 8&lt;2&gt; (<i>默认</i>&lt;&lt;<i>默认</i></div>
<div class="r" style="left:41px;top:540px">(-) Bracket Pipa&lt;2&gt; (<i>默</i></div>
<div class="r" style="left:41px;top:558px">(-) UB 8&lt;3&gt; (<i>默认</i>&lt;&lt;<i>默认</i></div>
<div class="r" style="left:41px;top:576px">(-) Main Panel&lt;1&gt; (<i>默认</i></div>
<div class="r" style="left:41px;top:594px">(-) Bracket Main Panel</div>
</div>

<!-- bottom text -->
<div class="a" style="left:211px;top:737px;font:bold 13px/16px 'Noto Sans CJK SC',sans-serif;color:#111;white-space:pre;letter-spacing:.5px">*等轴测</div>
<div class="s" style="left:83px;top:754px;">模型</div>
<div class="s" style="left:124px;top:754px;">运动算例 1</div>
<div class="r" style="left:5px;top:801px;">SolidWorks Premium 2014 x64 <i>版</i></div>
<div class="s" style="left:415px;top:802px;">完全定义</div>
<div class="s" style="left:481px;top:802px;">在编辑 装配体</div>
<div class="s" style="left:611px;top:802px;">自定义</div>
</body></html>
